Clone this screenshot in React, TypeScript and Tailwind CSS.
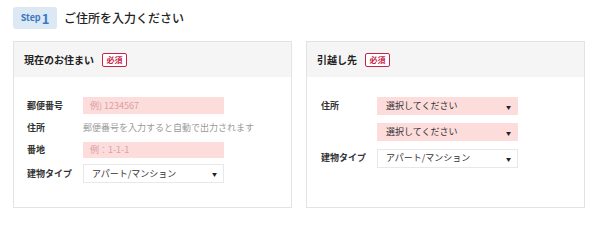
const font = { fontFamily: '"Noto Sans CJK JP", "Liberation Sans", sans-serif' }

function Required() {
  return (
    <span className="inline-flex h-[14px] w-[25px] items-center justify-center rounded-[2px] border border-[#c8244a] bg-white text-[8px] font-bold leading-none text-[#c8244a]">
      必須
    </span>
  )
}

function CardHeader({ title }: { title: string }) {
  return (
    <div className="flex h-[35px] items-center gap-[8px] bg-[#f5f5f5] px-[10px]">
      <span className="text-[10px] font-bold text-[#222]">{title}</span>
      <Required />
    </div>
  )
}

function Label({ children }: { children: React.ReactNode }) {
  return <div className="w-[56px] shrink-0 text-[9px] font-bold text-[#333]">{children}</div>
}

function Field({ placeholder, h = "h-[17px]" }: { placeholder: string; h?: string }) {
  return (
    <div className={`flex ${h} w-[141px] items-center bg-[#fddcdc] pl-[7px] text-[9px] text-[#d9a0a3]`}>
      {placeholder}
    </div>
  )
}

function Select({ value, pink = false }: { value: string; pink?: boolean }) {
  return (
    <div
      className={
        pink
          ? "flex h-[18px] w-[141px] items-center justify-between bg-[#fddcdc] pl-[9px] pr-[7px] text-[9px] text-[#333]"
          : "flex h-[19px] w-[141px] items-center justify-between border border-[#e8e8e8] bg-white pl-[8px] pr-[6px] text-[9px] text-[#333]"
      }
    >
      <span>{value}</span>
      <span className="text-[5px] leading-none text-[#222]">▼</span>
    </div>
  )
}

export default function App() {
  return (
    <div className="h-[224px] w-[600px] bg-white px-[13px] pt-[7px]" style={font}>
      <div className="flex items-center gap-[7px]">
        <div className="flex h-[22px] w-[44px] items-center justify-center rounded-[3px] bg-[#dce8f4] text-[#3a78c2]">
          <span className="text-[9px] font-bold">Step</span>
          <span className="ml-[1px] text-[13px] font-bold leading-none">1</span>
        </div>
        <h1 className="text-[12px] font-medium text-[#222]">ご住所を入力ください</h1>
      </div>

      <div className="mt-[12px] grid grid-cols-[279px_279px] gap-[14px]">
        <section className="h-[167px] border border-[#e3e3e3] bg-white">
          <CardHeader title="現在のお住まい" />
          <div className="flex flex-col px-[13px] pt-[20px]">
            <div className="flex h-[17px] items-center">
              <Label>郵便番号</Label>
              <Field placeholder="例) 1234567" />
            </div>
            <div className="mt-[5px] flex h-[17px] items-center">
              <Label>住所</Label>
              <span className="text-[9px] text-[#9a9a9a]">郵便番号を入力すると自動で出力されます</span>
            </div>
            <div className="mt-[6px] flex h-[16px] items-center">
              <Label>番地</Label>
              <Field placeholder="例：1-1-1" h="h-[16px]" />
            </div>
            <div className="mt-[6px] flex h-[19px] items-center">
              <Label>建物タイプ</Label>
              <Select value="アパート/マンション" />
            </div>
          </div>
        </section>

        <section className="h-[167px] border border-[#e3e3e3] bg-white">
          <CardHeader title="引越し先" />
          <div className="flex flex-col px-[14px] pt-[20px]">
            <div className="flex items-start">
              <div className="flex h-[18px] items-center">
                <Label>住所</Label>
              </div>
              <div className="flex flex-col gap-[8px]">
                <Select value="選択してください" pink />
                <Select value="選択してください" pink />
              </div>
            </div>
            <div className="mt-[8px] flex h-[18px] items-center">
              <Label>建物タイプ</Label>
              <Select value="アパート/マンション" />
            </div>
          </div>
        </section>
      </div>
    </div>
  )
}
